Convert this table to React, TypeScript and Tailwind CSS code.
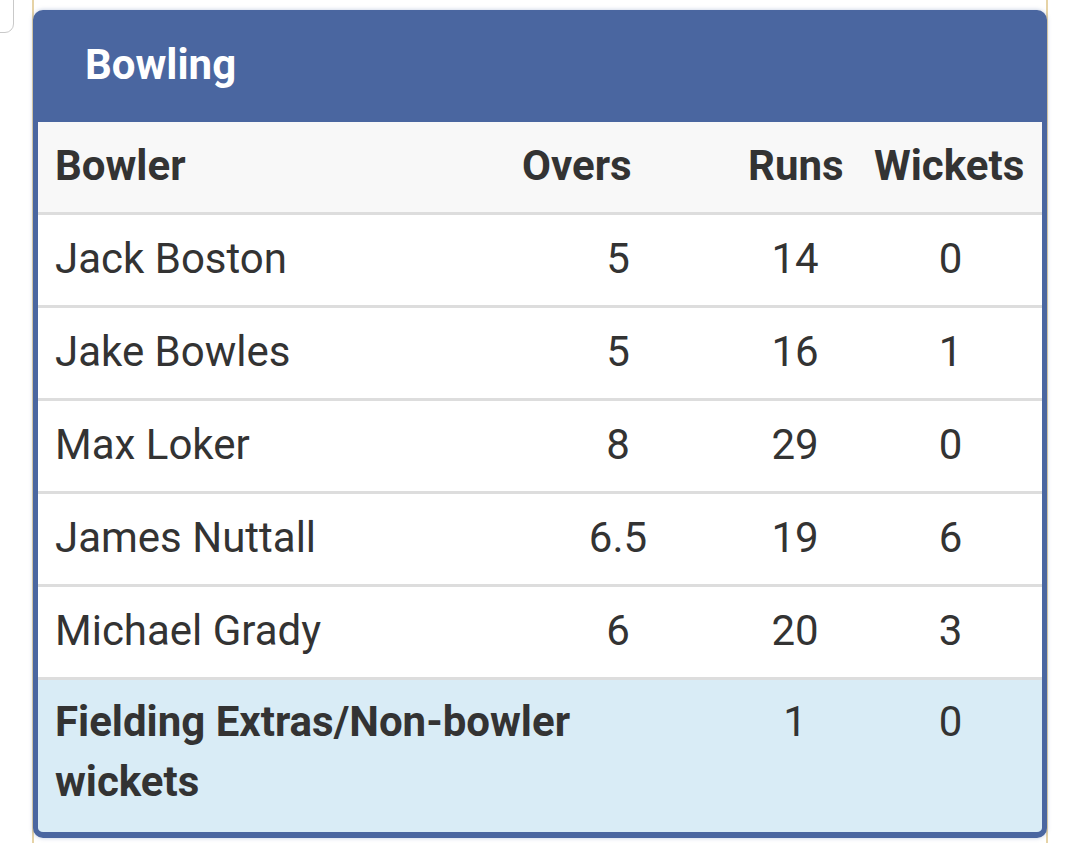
import React from "react";

const rows = [
  { name: "Jack Boston", overs: "5", runs: "14", wkts: "0" },
  { name: "Jake Bowles", overs: "5", runs: "16", wkts: "1" },
  { name: "Max Loker", overs: "8", runs: "29", wkts: "0" },
  { name: "James Nuttall", overs: "6.5", runs: "19", wkts: "6" },
  { name: "Michael Grady", overs: "6", runs: "20", wkts: "3" },
];

export default function App() {
  return (
    <div
      className="relative w-[1080px] h-[843px] bg-white overflow-hidden text-[#333]"
      style={{ fontFamily: "Roboto, 'Noto Sans', sans-serif" }}
    >
      {/* small rounded box at top-left corner */}
      <div className="absolute left-[-10px] top-[-10px] w-[24px] h-[43px] border border-[#c9c9c9] rounded-br-[9px] bg-white" />
      {/* page container with beige side lines */}
      <div className="ml-[32px] w-[1016px] h-full border-x-2 border-[#e6d3a6]">
        <div className="pt-[10px] -mx-[1px]">
          <div className="w-[1014px] rounded-[10px] border-[5px] border-b-[6px] border-[#4a66a0] bg-[#4a66a0] overflow-hidden shadow-[0_0_4px_rgba(74,102,160,0.35)]">
            <div className="h-[107px] pl-[47px] pt-[20px] text-white font-bold text-[42px] leading-[60px]">
              Bowling
            </div>
            <table className="w-[1004px] table-fixed border-collapse text-[42px] leading-[60px]">
              <colgroup>
                <col className="w-[467px]" />
                <col className="w-[226px]" />
                <col className="w-[128px]" />
                <col className="w-[183px]" />
              </colgroup>
              <thead>
                <tr className="bg-[#f8f8f8] border-b-[3px] border-[#dddddd]">
                  <th className="text-left font-bold px-[17px] pt-[14px] pb-[16px] align-top">Bowler</th>
                  <th className="text-left font-bold px-[17px] pt-[14px] pb-[16px] align-top">Overs</th>
                  <th className="text-left font-bold px-[17px] pt-[14px] pb-[16px] align-top">Runs</th>
                  <th className="text-left font-bold px-[15px] pt-[14px] pb-[16px] align-top">Wickets</th>
                </tr>
              </thead>
              <tbody>
                {rows.map((r) => (
                  <tr key={r.name} className="bg-white border-b-[3px] border-[#dddddd]">
                    <td className="text-left px-[17px] pt-[14px] pb-[16px] align-top">{r.name}</td>
                    <td className="text-center px-[17px] pt-[14px] pb-[16px] align-top">{r.overs}</td>
                    <td className="text-center px-[17px] pt-[14px] pb-[16px] align-top">{r.runs}</td>
                    <td className="text-center px-[17px] pt-[14px] pb-[16px] align-top">{r.wkts}</td>
                  </tr>
                ))}
                <tr className="bg-[#d9ecf6]">
                  <td colSpan={2} className="text-left font-bold px-[17px] pt-[12px] pb-[20px] align-top">
                    Fielding Extras/Non-bowler wickets
                  </td>
                  <td className="text-center px-[17px] pt-[12px] pb-[20px] align-top">1</td>
                  <td className="text-center px-[17px] pt-[12px] pb-[20px] align-top">0</td>
                </tr>
              </tbody>
            </table>
          </div>
        </div>
      </div>
    </div>
  );
}
